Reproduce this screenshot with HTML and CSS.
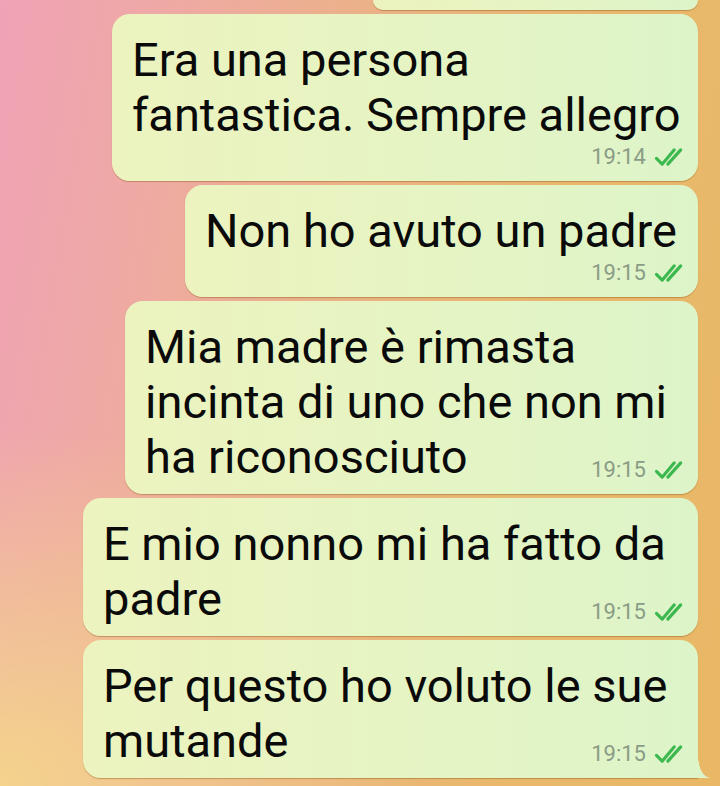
FILE: index.html
```html
<!DOCTYPE html>
<html lang="it">
<head>
    <meta charset="UTF-8">
    <meta name="viewport" content="width=device-width, initial-scale=1.0">
    <title>Chat</title>
    <link rel="stylesheet" href="styles.css">
</head>
<body>
    <div class="chat">
        <div class="msg msg--cut"></div>

        <div class="msg msg--w586">
            <p class="text">Era una persona fantastica. Sempre allegro<span class="spacer"></span></p>
            <span class="meta">19:14 <svg class="ticks" viewBox="0 0 22 14"><path d="M1.5 8 L5.5 12 L14 2"/><path d="M9.5 12 L18.5 2"/></svg></span>
        </div>

        <div class="msg msg--w513">
            <p class="text">Non ho avuto un padre<span class="spacer"></span></p>
            <span class="meta">19:15 <svg class="ticks" viewBox="0 0 22 14"><path d="M1.5 8 L5.5 12 L14 2"/><path d="M9.5 12 L18.5 2"/></svg></span>
        </div>

        <div class="msg msg--w573">
            <p class="text">Mia madre è rimasta incinta di uno che non mi ha riconosciuto<span class="spacer"></span></p>
            <span class="meta">19:15 <svg class="ticks" viewBox="0 0 22 14"><path d="M1.5 8 L5.5 12 L14 2"/><path d="M9.5 12 L18.5 2"/></svg></span>
        </div>

        <div class="msg msg--w615">
            <p class="text">E mio nonno mi ha fatto da padre<span class="spacer"></span></p>
            <span class="meta">19:15 <svg class="ticks" viewBox="0 0 22 14"><path d="M1.5 8 L5.5 12 L14 2"/><path d="M9.5 12 L18.5 2"/></svg></span>
        </div>

        <div class="msg msg--w615 msg--tail">
            <p class="text">Per questo ho voluto le sue mutande<span class="spacer"></span></p>
            <span class="meta">19:15 <svg class="ticks" viewBox="0 0 22 14"><path d="M1.5 8 L5.5 12 L14 2"/><path d="M9.5 12 L18.5 2"/></svg></span>
        </div>
    </div>
</body>
</html>
```

FILE: styles.css
```css
*{
    margin: 0;
    padding: 0;
    box-sizing: border-box;
}
html, body{
    height: 100%;
}
body{
    font-family: Roboto, "Noto Sans", sans-serif;
    color: #0a0a0a;
    overflow: hidden;
    background:
        radial-gradient(ellipse 420px 360px at 0 100%, rgba(244, 214, 138, .95), rgba(244, 214, 138, 0)),
        linear-gradient(100deg, #f0a2b6 0%, #eeaaa2 22%, #ebb386 45%, #e9b86e 70%, #e8b866 100%);
}
.chat{
    display: flex;
    flex-direction: column;
    align-items: flex-end;
    gap: 4px;
    padding-right: 22px;
}
.msg{
    position: relative;
    border-radius: 18px;
    padding: 18px 12px 10px 20px;
    background: linear-gradient(90deg, #ecf3bf 0%, #e6f4c3 50%, #ddf4c9 100%);
    box-shadow: 0 1px 1px rgba(140, 90, 30, .45);
}
.msg--cut{
    width: 325px;
    height: 10px;
    padding: 0;
    border-radius: 0 0 18px 18px;
}
.msg--w586{ width: 586px; }
.msg--w513{ width: 513px; }
.msg--w573{ width: 573px; }
.msg--w615{ width: 615px; }
.msg--tail{
    border-bottom-right-radius: 0;
}
.msg--tail::after{
    content: "";
    position: absolute;
    right: -12px;
    bottom: 0;
    width: 12px;
    height: 22px;
    background: radial-gradient(ellipse 12px 22px at 100% 0, transparent 97%, #ddf4c9 100%);
}
.text{
    display: flow-root;
    font-size: 47px;
    line-height: 55px;
}
.spacer{
    float: right;
    width: 104px;
    height: 29px;
}
.meta{
    position: absolute;
    right: 10px;
    bottom: 12px;
    display: flex;
    align-items: center;
    gap: 6px;
    font-size: 22px;
    line-height: 24px;
    color: #8a9c86;
}
.ticks{
    width: 36px;
    height: 20px;
    fill: none;
    stroke: #3cb84f;
    stroke-width: 2.2;
    stroke-linecap: round;
    stroke-linejoin: round;
}
```
